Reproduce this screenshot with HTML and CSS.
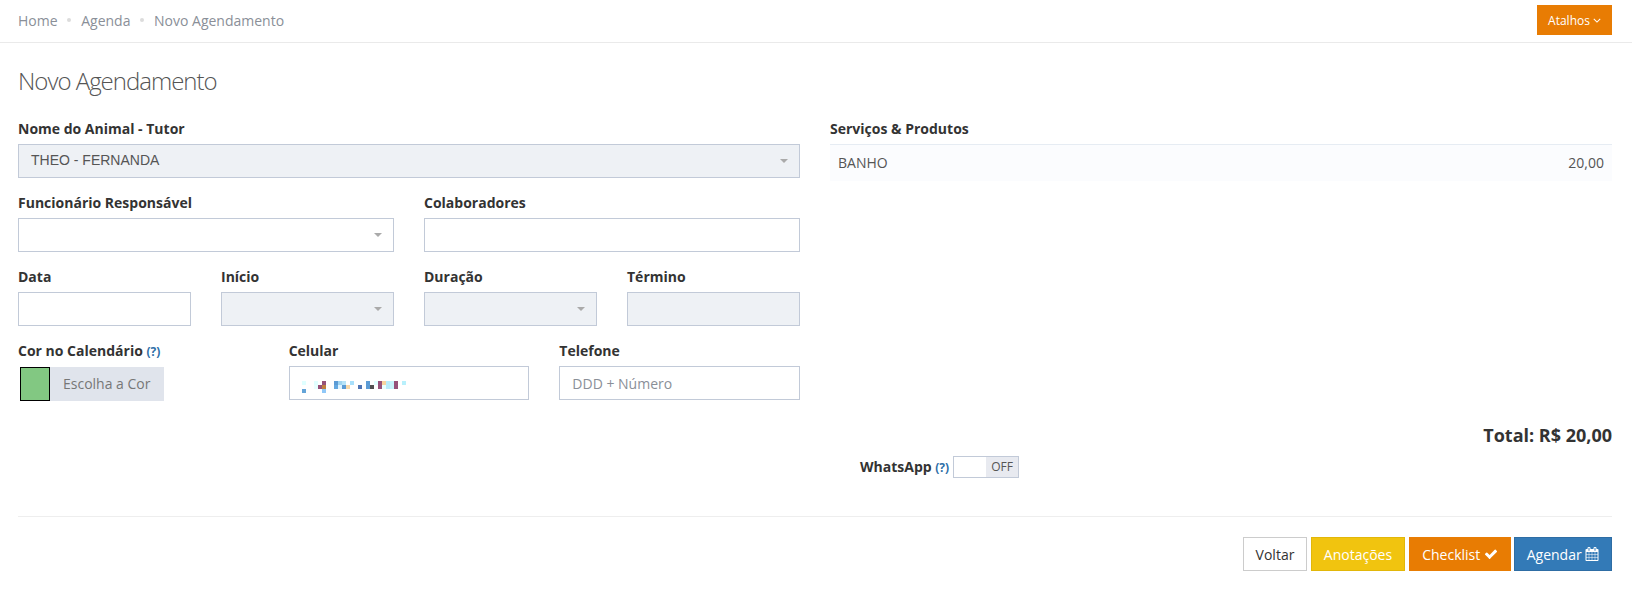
FILE: index.html
```html
<!DOCTYPE html>
<html lang="pt-BR">
<head>
<meta charset="utf-8">
<title>Novo Agendamento</title>
<link rel="stylesheet" href="styles.css">
</head>
<body>
<header class="topbar">
  <nav class="crumbs">
    <span>Home</span><i class="dot"></i><span>Agenda</span><i class="dot"></i><span>Novo Agendamento</span>
  </nav>
  <button class="shortcut">Atalhos <svg class="angle" viewBox="0 0 10 6"><path d="M1 1l4 4 4-4" fill="none" stroke="#fff" stroke-width="1.3"/></svg></button>
</header>
<main class="page">
  <h1 class="title">Novo Agendamento</h1>
  <div class="columns">
    <section class="left">
      <div class="row one">
        <div class="field"><label>Nome do Animal - Tutor</label><div class="box disabled select arial">THEO - FERNANDA<b class="caret"></b></div></div>
      </div>
      <div class="row two">
        <div class="field"><label>Funcionário Responsável</label><div class="box select"><b class="caret"></b></div></div>
        <div class="field"><label>Colaboradores</label><div class="box"></div></div>
      </div>
      <div class="row four">
        <div class="field"><label>Data</label><div class="box"></div></div>
        <div class="field"><label>Início</label><div class="box disabled select"><b class="caret"></b></div></div>
        <div class="field"><label>Duração</label><div class="box disabled select"><b class="caret"></b></div></div>
        <div class="field"><label>Término</label><div class="box disabled"></div></div>
      </div>
      <div class="row three">
        <div class="field"><label>Cor no Calendário <a class="help">(?)</a></label>
          <div class="colorpick"><span class="swatch"></span><span class="colortext">Escolha a Cor</span></div>
        </div>
        <div class="field"><label>Celular</label>
          <div class="box phone">
            <svg class="pixels" width="104" height="12" viewBox="0 0 26 3" shape-rendering="crispEdges">
              <rect x="0" y="0" width="1" height="1" fill="#e0ffff"/><rect x="3" y="0" width="1" height="1" fill="#e0ffff"/><rect x="5" y="0" width="1" height="1" fill="#96527a"/><rect x="8" y="0" width="1" height="1" fill="#5b9bd5"/><rect x="9" y="0" width="1" height="1" fill="#a0d4f0"/><rect x="10" y="0" width="1" height="1" fill="#b8e4f8"/><rect x="12" y="0" width="1" height="1" fill="#a8e0fc"/><rect x="16" y="0" width="1" height="1" fill="#5b9bd5"/><rect x="18" y="0" width="1" height="1" fill="#e0ffff"/><rect x="19" y="0" width="1" height="1" fill="#96527a"/><rect x="20" y="0" width="1" height="1" fill="#f8d4a0"/><rect x="21" y="0" width="1" height="1" fill="#b8ecfc"/><rect x="22" y="0" width="1" height="1" fill="#c8f4fc"/><rect x="23" y="0" width="1" height="1" fill="#96527a"/><rect x="25" y="0" width="1" height="1" fill="#b8f0fc"/>
              <rect x="3" y="1" width="1" height="1" fill="#e8ffff"/><rect x="4" y="1" width="1" height="1" fill="#96527a"/><rect x="5" y="1" width="1" height="1" fill="#c08040"/><rect x="8" y="1" width="1" height="1" fill="#64a8e0"/><rect x="9" y="1" width="1" height="1" fill="#e0f4ff"/><rect x="10" y="1" width="1" height="1" fill="#5b9bd5"/><rect x="11" y="1" width="1" height="1" fill="#f8d8a8"/><rect x="14" y="1" width="1" height="1" fill="#4f74b4"/><rect x="16" y="1" width="1" height="1" fill="#5b9bd5"/><rect x="17" y="1" width="1" height="1" fill="#505050"/><rect x="19" y="1" width="1" height="1" fill="#96527a"/><rect x="20" y="1" width="1" height="1" fill="#e8ffff"/><rect x="21" y="1" width="1" height="1" fill="#b8ecfc"/><rect x="22" y="1" width="1" height="1" fill="#c8f4fc"/><rect x="23" y="1" width="1" height="1" fill="#96527a"/>
              <rect x="0" y="2" width="1" height="1" fill="#64a4d8"/><rect x="5" y="2" width="1" height="1" fill="#90c8f8"/>
            </svg>
          </div>
        </div>
        <div class="field"><label>Telefone</label><div class="box hint">DDD + Número</div></div>
      </div>
    </section>
    <section class="right">
      <label>Serviços &amp; Produtos</label>
      <div class="service"><span>BANHO</span><span>20,00</span></div>
    </section>
  </div>
  <div class="total">Total: R$ 20,00</div>
  <div class="whats">
    <label>WhatsApp <a class="help">(?)</a></label>
    <div class="toggle"><span class="toggle-on"></span><span class="toggle-off">OFF</span></div>
  </div>
  <hr class="rule">
  <div class="actions">
    <button class="btn voltar">Voltar</button>
    <button class="btn anot">Anotações</button>
    <button class="btn check">Checklist <svg class="ico" viewBox="0 0 1792 1792"><path fill="#fff" d="M1671 566q0 40-28 68l-724 724-136 136q-28 28-68 28t-68-28l-136-136-362-362q-28-28-28-68t28-68l136-136q28-28 68-28t68 28l294 295 656-657q28-28 68-28t68 28l136 136q28 28 28 68z"/></svg></button>
    <button class="btn agendar">Agendar <svg class="ico" viewBox="0 0 1792 1792"><path fill="#fff" d="M192 1664h288v-288h-288v288zm352 0h320v-288h-320v288zm-352-352h288v-320h-288v320zm352 0h320v-320h-320v320zm-352-384h288v-288h-288v288zm736 736h320v-288h-320v288zm-384-736h320v-288h-320v288zm768 736h288v-288h-288v288zm-384-352h320v-320h-320v320zm-352-864v-288q0-13-9.500-22.500t-22.500-9.500h-64q-13 0-22.500 9.500t-9.500 22.500v288q0 13 9.500 22.500t22.500 9.500h64q13 0 22.500-9.500t9.500-22.500zm736 864h288v-320h-288v320zm-384-384h320v-288h-320v288zm384 0h288v-288h-288v288zm32-480v-288q0-13-9.500-22.500t-22.500-9.500h-64q-13 0-22.500 9.500t-9.500 22.500v288q0 13 9.500 22.500t22.500 9.500h64q13 0 22.500-9.500t9.500-22.500zm384-64v1280q0 52-38 90t-90 38h-1408q-52 0-90-38t-38-90v-1280q0-52 38-90t90-38h128v-96q0-66 47-113t113-47h64q66 0 113 47t47 113v96h384v-96q0-66 47-113t113-47h64q66 0 113 47t47 113v96h128q52 0 90 38t38 90z"/></svg></button>
  </div>
</main>
</body>
</html>
```

FILE: styles.css
```css
* { box-sizing: border-box; }
html, body { margin: 0; padding: 0; background: #fff; }
body { font-family: "Open Sans", sans-serif; font-size: 14px; color: #333; height: 596px; overflow: hidden; }

.topbar { height: 43px; border-bottom: 1px solid #eaeaea; display: flex; align-items: flex-start; justify-content: space-between; padding: 5px 20px 0 18px; }
.crumbs { display: flex; align-items: center; height: 30px; color: #8a8f98; gap: 8.8px; }
.dot { width: 4px; height: 4px; border-radius: 50%; background: #dcdcdc; margin: 0 1px; }
.shortcut { width: 75px; height: 30px; background: #e87c03; border: 0; color: #fff; font: 12px "Open Sans", sans-serif; padding: 0; display: flex; align-items: center; justify-content: center; gap: 3px; }
.angle { width: 8px; height: 5px; }

.page { padding: 0 20px 0 18px; }
.title { font-family: "Open Sans", sans-serif; font-weight: 300; font-size: 24px; letter-spacing: -1px; line-height: 33px; margin: 21px 0 22px; color: #555; }

.columns { display: grid; grid-template-columns: 782px 782px; column-gap: 30px; }
.row { display: grid; column-gap: 30px; margin-bottom: 15px; }
.one { grid-template-columns: 1fr; }
.two { grid-template-columns: 1fr 1fr; }
.four { grid-template-columns: repeat(4, 1fr); }
.three { grid-template-columns: 1fr 1fr 1fr; }
label { display: block; font-weight: 700; font-size: 14px; line-height: 19px; margin-bottom: 6px; color: #333; }
.help { color: #2f6fa8; font-size: 12px; }
.box { height: 34px; border: 1px solid #c2cad8; background: #fff; position: relative; display: flex; align-items: center; padding: 0 12px; color: #555; }
.arial { font-family: "Liberation Sans", sans-serif; padding-bottom: 2px; }
.disabled { background: #eef1f5; }
.caret { position: absolute; right: 11px; top: 14px; border: 4px solid transparent; border-top: 4px solid #aaa; border-bottom: 0; }
.hint { color: #8a8f98; font-size: 14px; padding-top: 1px; }
.pixels { margin: 8px 0 0 0; flex: none; }
.colorpick { display: flex; height: 34px; width: 144px; background: #e0e4ec; margin-left: 2px; }
.swatch { width: 30px; height: 34px; background: #82c882; border: 1px solid #000; }
.colortext { padding-left: 13px; line-height: 34px; color: #777; }

.service { height: 37px; border-top: 1px solid #e6ecf3; background: #fbfcfe; display: flex; justify-content: space-between; align-items: center; padding: 0 8px 2px; color: #555; }

.total { text-align: right; font-weight: 700; font-size: 18px; line-height: 25px; margin-top: 7px; }
.whats { display: flex; align-items: center; margin-top: 7px; margin-left: 842px; height: 24px; }
.whats label { margin: 0 4px 0 0; }
.toggle { display: flex; width: 66px; height: 22px; border: 1px solid #c2cad8; }
.toggle-on { width: 32px; }
.toggle-off { flex: 1; background: #e8eaf0; font-size: 12px; line-height: 20px; text-align: center; color: #555; }
.rule { border: 0; border-top: 1px solid #eee; margin: 37px 0 20px; }
.actions { display: flex; justify-content: flex-end; gap: 4px; }
.btn { height: 34px; border: 1px solid; font: 14px "Open Sans", sans-serif; color: #fff; padding: 0; display: flex; align-items: center; justify-content: center; gap: 3.6px; }
.voltar { width: 64px; background: #fff; border-color: #ccc; color: #333; }
.anot { width: 94px; background: #f1c40f; border-color: #e2b709; }
.check { width: 102px; background: #e87c03; border-color: #e87c03; margin-right: -1px; }
.agendar { width: 98px; background: #337ab7; border-color: #2e6da4; }
.ico { width: 14px; height: 14px; }
```
